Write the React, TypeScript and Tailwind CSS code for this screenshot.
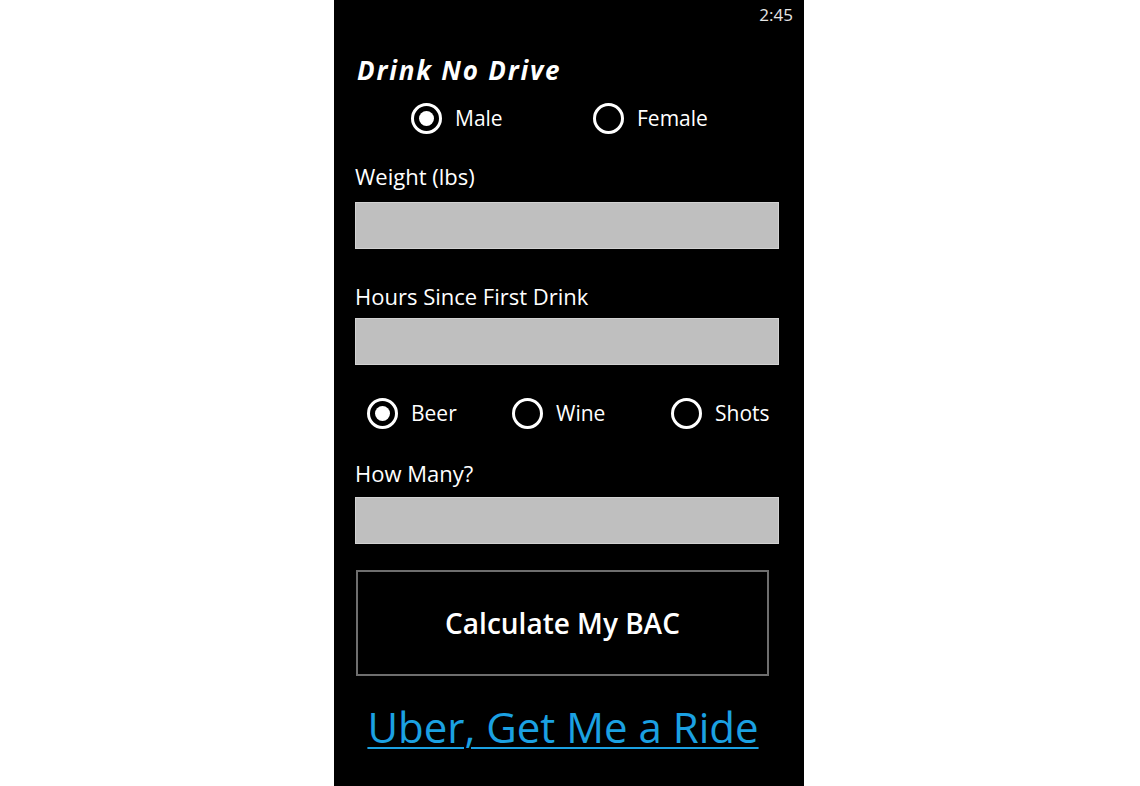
import React from "react";

function Radio({ checked, label }: { checked?: boolean; label: string }) {
  return (
    <div className="flex items-center">
      <div className="w-[31px] h-[31px] rounded-full border-[3px] border-white flex items-center justify-center">
        {checked && <div className="w-[15px] h-[15px] rounded-full bg-white" />}
      </div>
      <span className="ml-[13px] text-[21px] leading-[28px] text-white">{label}</span>
    </div>
  );
}

export default function App() {
  return (
    <div
      className="w-full h-[786px] bg-white flex pl-[334px]"
      style={{ fontFamily: '"Open Sans", "Noto Sans", sans-serif' }}
    >
      <div className="w-[470px] h-full bg-black text-white flex flex-col">
        <div className="h-[55px] flex justify-end items-start pr-[11px] pt-[3px]">
          <span className="text-[17px] leading-[24px] text-[#e6e6e6]">2:45</span>
        </div>
        <div className="h-[30px] pl-[23px] text-[26px] leading-[30px] font-bold italic tracking-[1.8px]">
          Drink No Drive
        </div>
        <div className="mt-[15px] h-[36px] flex items-center pl-[77px]">
          <div className="w-[182px]">
            <Radio checked label="Male" />
          </div>
          <Radio label="Female" />
        </div>
        <div className="mt-[26px] pl-[21px] text-[22px] leading-[28px]">Weight (lbs)</div>
        <div className="mt-[12px] ml-[21px] w-[424px] h-[47px] bg-[#bfbfbf] border border-[#d2d2d2]" />
        <div className="mt-[33px] pl-[21px] text-[22px] leading-[28px]">Hours Since First Drink</div>
        <div className="mt-[8px] ml-[21px] w-[424px] h-[47px] bg-[#bfbfbf] border border-[#d2d2d2]" />
        <div className="mt-[30px] h-[36px] flex items-center pl-[33px]">
          <div className="w-[145px]">
            <Radio checked label="Beer" />
          </div>
          <div className="w-[159px]">
            <Radio label="Wine" />
          </div>
          <Radio label="Shots" />
        </div>
        <div className="mt-[28px] pl-[21px] text-[22px] leading-[28px]">How Many?</div>
        <div className="mt-[10px] ml-[21px] w-[424px] h-[47px] bg-[#bfbfbf] border border-[#d2d2d2]" />
        <div className="mt-[26px] ml-[22px] w-[413px] h-[106px] border-2 border-[#6e6e6e] flex items-center justify-center">
          <span className="text-[28px] leading-[34px] font-semibold">Calculate My BAC</span>
        </div>
        <div className="mt-[26px] flex justify-center pr-[12px]">
          <span className="text-[42px] leading-[50px] text-[#1ba1e2] underline underline-offset-[4px] decoration-2">
            Uber, Get Me a Ride
          </span>
        </div>
      </div>
    </div>
  );
}
